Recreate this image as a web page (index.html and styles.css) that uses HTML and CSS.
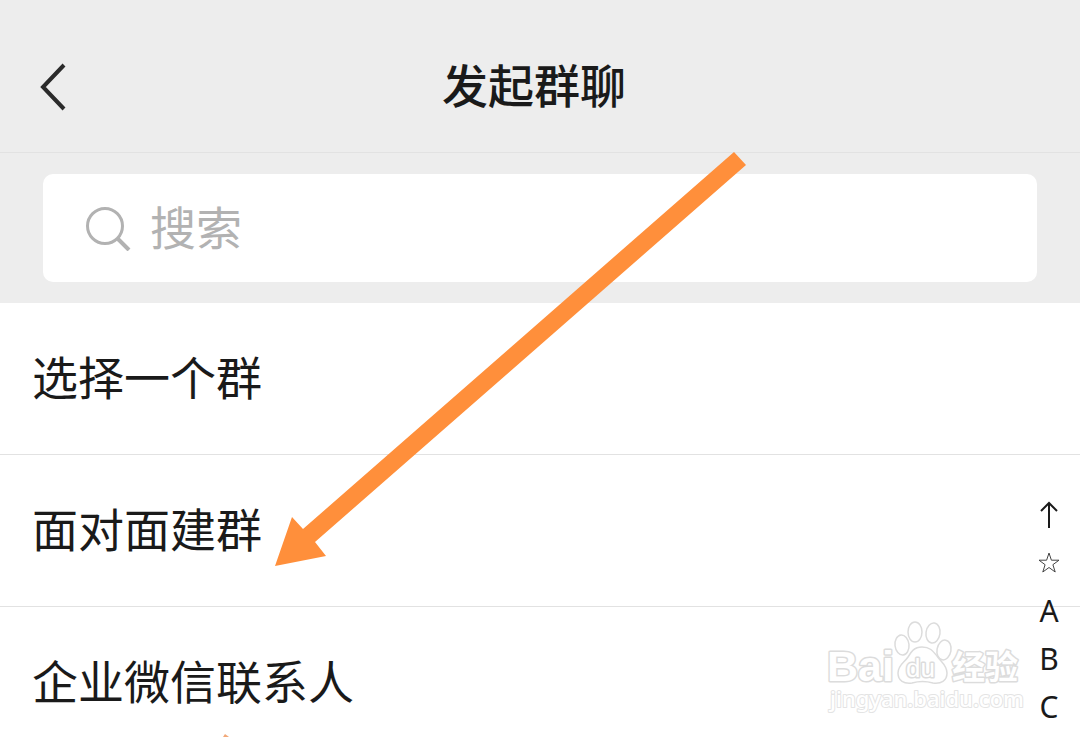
FILE: index.html
```html
<!DOCTYPE html>
<html lang="zh-CN">

<head>
    <meta charset="UTF-8">
    <meta name="viewport" content="width=device-width, initial-scale=1.0">
    <title>发起群聊</title>
    <link rel="stylesheet" href="styles.css">
</head>

<body>
    <div class="page">
        <header class="header">
            <button class="back" type="button" aria-label="返回">
                <svg width="28" height="48" viewBox="0 0 28 48">
                    <path d="M24 2 L3 24 L24 46" fill="none" stroke="#2b2b2b" stroke-width="4" />
                </svg>
            </button>
            <h1>发起群聊</h1>
        </header>

        <div class="search-area">
            <label class="search">
                <svg width="46" height="46" viewBox="0 0 46 46" fill="none" stroke="#b2b2b2" stroke-width="3">
                    <circle cx="20" cy="21" r="17.5" />
                    <path d="M32 33 L44 45" stroke-width="4" />
                </svg>
                <input type="text" placeholder="搜索" aria-label="搜索">
            </label>
        </div>

        <ul class="list">
            <li><a href="#">选择一个群</a></li>
            <li><a href="#">面对面建群</a></li>
            <li><a href="#">企业微信联系人</a></li>
        </ul>

        <svg class="watermark" width="200" height="96" viewBox="0 0 200 96">
            <g fill="#fff" stroke="#dcdcdc" stroke-width="1.5">
                <text class="brand" x="3" y="62">Bai</text>
                <ellipse cx="78" cy="26" rx="7" ry="10" transform="rotate(-6 78 26)" />
                <ellipse cx="91" cy="13" rx="7" ry="10" />
                <ellipse cx="109" cy="14" rx="7" ry="10" transform="rotate(8 109 14)" />
                <ellipse cx="120" cy="31" rx="7" ry="10" transform="rotate(10 120 31)" />
                <path d="M98 28 C90 28 87 33 84 38 C80 44 74 46 74 54 C74 62 80 65 88 64 C95 62 102 62 109 64 C117 65 123 62 123 54 C123 46 117 43 113 37 C109 32 106 28 98 28 Z" />
                <text class="du" x="82" y="58">du</text>
                <text class="cn" x="128" y="60">经验</text>
                <text class="site" x="6" y="88">jingyan.baidu.com</text>
            </g>
        </svg>

        <nav class="index">
            <a href="#top" aria-label="顶部">
                <svg width="20" height="28" viewBox="0 0 20 28" fill="none" stroke="#1a1a1a" stroke-width="2">
                    <path d="M10 2 V27 M2 10 L10 2 L18 10" />
                </svg>
            </a>
            <a href="#star" aria-label="星标">
                <svg width="22" height="22" viewBox="0 0 22 22" fill="none" stroke="#444" stroke-width="1">
                    <path d="M11 1 L13.4 8.2 L21 8.2 L14.9 12.7 L17.2 20 L11 15.5 L4.8 20 L7.1 12.7 L1 8.2 L8.6 8.2 Z" />
                </svg>
            </a>
            <a href="#A">A</a>
            <a href="#B">B</a>
            <a href="#C">C</a>
        </nav>

        <svg class="arrow" width="472" height="416" viewBox="0 0 472 416" fill="#ff8f3b">
            <path d="M459 0 L471 13 L40 390 L51 404 L0 414 L17 365 L28 377 Z" />
        </svg>
        <svg class="arrow-tip" width="6" height="3" viewBox="0 0 6 3" fill="#f2a878">
            <path d="M2 0 L6 3 L0 3 Z" />
        </svg>
    </div>
</body>

</html>
```

FILE: styles.css
```css
* {
    box-sizing: border-box;
}

body {
    margin: 0;
    background-color: #fff;
    color: #1a1a1a;
    font-family: "Noto Sans CJK SC", sans-serif;
}

.page {
    position: relative;
    height: 100vh;
    overflow: hidden;
}

a {
    color: inherit;
    text-decoration: none;
}

.header {
    display: grid;
    grid-template-columns: 28px 1fr 40px;
    align-items: center;
    padding: 48px 40px 26px;
    background-color: #ededed;
    border-bottom: 1px solid #e2e2e2;
}

.header h1 {
    margin: 0;
    padding-bottom: 8px;
    font-size: 46px;
    font-weight: 500;
    line-height: 70px;
    text-align: center;
}

.back {
    display: flex;
    padding: 0;
    border: none;
    background: none;
    cursor: pointer;
}

.search-area {
    padding: 21px 43px;
    background-color: #ededed;
}

.search {
    display: flex;
    align-items: center;
    gap: 19px;
    height: 108px;
    padding: 0 42px;
    background-color: #fff;
    border-radius: 10px;
}

.search input {
    flex: 1;
    min-width: 0;
    padding: 0 0 6px;
    border: none;
    outline: none;
    background: none;
    color: #1a1a1a;
    font-family: inherit;
    font-size: 46px;
}

.search input::placeholder {
    color: #b2b2b2;
    opacity: 1;
}

.list {
    margin: 0;
    padding: 0;
    list-style: none;
}

.list li {
    border-bottom: 1px solid #e2e2e2;
}

.list a {
    display: block;
    padding: 37px 32px 43px;
    font-size: 46px;
    line-height: 71px;
}

/* letter index over the list */
.index {
    position: absolute;
    right: 16px;
    bottom: 6px;
    display: flex;
    flex-direction: column;
    width: 30px;
    font-family: "Noto Sans", sans-serif;
    font-size: 30px;
    line-height: 46px;
}

.index a {
    display: flex;
    align-items: center;
    justify-content: center;
    height: 48px;
}

.watermark {
    position: absolute;
    right: 56px;
    bottom: 22px;
}

.watermark text {
    font-family: "Liberation Sans", sans-serif;
    font-weight: bold;
    stroke-width: 3px;
    stroke-linejoin: round;
    paint-order: stroke;
}

.watermark .brand {
    font-size: 43px;
}

.watermark .du {
    font-size: 26px;
    font-weight: normal;
}

.watermark .cn {
    font-family: "Noto Sans CJK SC", sans-serif;
    font-size: 33px;
}

.watermark .site {
    font-family: "Noto Sans", sans-serif;
    font-size: 22px;
    font-weight: 500;
    stroke: #e4e4e4;
    stroke-width: 2px;
}

.arrow {
    position: absolute;
    top: 152px;
    left: 275px;
    pointer-events: none;
}

.arrow-tip {
    position: absolute;
    bottom: 0;
    left: 223px;
}
```
